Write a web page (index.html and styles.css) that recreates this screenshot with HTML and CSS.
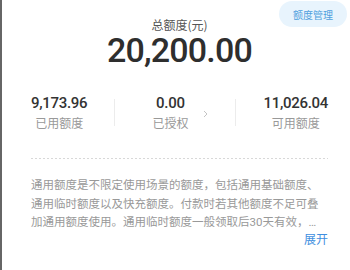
FILE: index.html
```html
<!DOCTYPE html>
<html>
<head>
  <meta name="viewport" content="width=device-width, initial-scale=1">
  <title>额度</title>
  <link rel="stylesheet" href="styles.css">
</head>
<body>
  <div class="page">
    <button class="manage-button">额度管理</button>
    <div class="total">
      <div class="total-label">总额度(元)</div>
      <div class="total-amount">20,200.00</div>
    </div>
    <div class="stats">
      <div class="stat">
        <div class="stat-value">9,173.96</div>
        <div class="stat-label">已用额度</div>
      </div>
      <div class="divider"></div>
      <div class="stat-link">
        <div class="stat">
          <div class="stat-value">0.00</div>
          <div class="stat-label">已授权</div>
        </div>
        <svg class="chevron" width="5" height="8" viewBox="0 0 5 8">
          <path d="M1 1 L4 4 L1 7" fill="none" stroke="#c4c4c4" stroke-width="1"/>
        </svg>
      </div>
      <div class="divider"></div>
      <div class="stat">
        <div class="stat-value">11,026.04</div>
        <div class="stat-label">可用额度</div>
      </div>
    </div>
    <div class="dashed"></div>
    <p class="desc">通用额度是不限定使用场景的额度，包括通用基础额度、通用临时额度以及快充额度。付款时若其他额度不足可叠加通用额度使用。通用临时额度一般领取后30天有效，…</p>
    <div class="more-row">
      <a class="more" href="#">展开</a>
    </div>
  </div>
</body>
</html>
```

FILE: styles.css
```css
body {
  margin: 0;
  background: #fff;
  font-family: Roboto, "Noto Sans CJK SC", sans-serif;
}
.page {
  position: relative;
  height: 270px;
  box-sizing: border-box;
  border-left: 2px solid #666;
  padding: 17px 22px 0 29px;
}
.manage-button {
  position: absolute;
  top: 1px;
  right: 3px;
  width: 68px;
  height: 26px;
  border: none;
  border-radius: 13px;
  background: #e8f4fd;
  color: #4f9fdd;
  font-family: "Noto Sans CJK SC", sans-serif;
  font-size: 10px;
  padding: 0;
}
.total {
  text-align: center;
}
.total-label {
  font-family: "Noto Sans CJK SC", sans-serif;
  font-size: 12px;
  line-height: 16px;
  color: #555;
}
.total-amount {
  margin-top: 2px;
  font-size: 34px;
  font-weight: 500;
  line-height: 30px;
  letter-spacing: -0.8px;
  color: #2e2e2e;
}
.stats {
  display: flex;
  justify-content: space-between;
  align-items: center;
  margin-top: 29px;
}
.stat {
  text-align: center;
}
.stat-value {
  font-size: 15px;
  font-weight: 500;
  line-height: 18px;
  letter-spacing: -0.3px;
  color: #333;
}
.stat-label {
  margin-top: 3px;
  font-family: "Noto Sans CJK SC", sans-serif;
  font-size: 12px;
  line-height: 16px;
  color: #999;
}
.stat-link {
  display: flex;
  align-items: center;
  margin-left: 10px;
}
.chevron {
  margin-left: 15px;
  margin-top: 2px;
}
.divider {
  width: 1px;
  height: 27px;
  background: #ececec;
}
.dashed {
  margin-top: 27px;
  height: 1px;
  background: repeating-linear-gradient(to right, #d8d8d8 0 2px, transparent 2px 4px);
}
.desc {
  width: 291px;
  margin: 17px 0 0;
  font-family: Roboto, "Noto Sans CJK SC", sans-serif;
  font-size: 11.5px;
  line-height: 18.5px;
  color: #999;
}
.more-row {
  display: flex;
  justify-content: flex-end;
}
.more {
  font-family: "Noto Sans CJK SC", sans-serif;
  font-size: 12px;
  line-height: 14px;
  color: #3f8fe0;
  text-decoration: none;
}
```
